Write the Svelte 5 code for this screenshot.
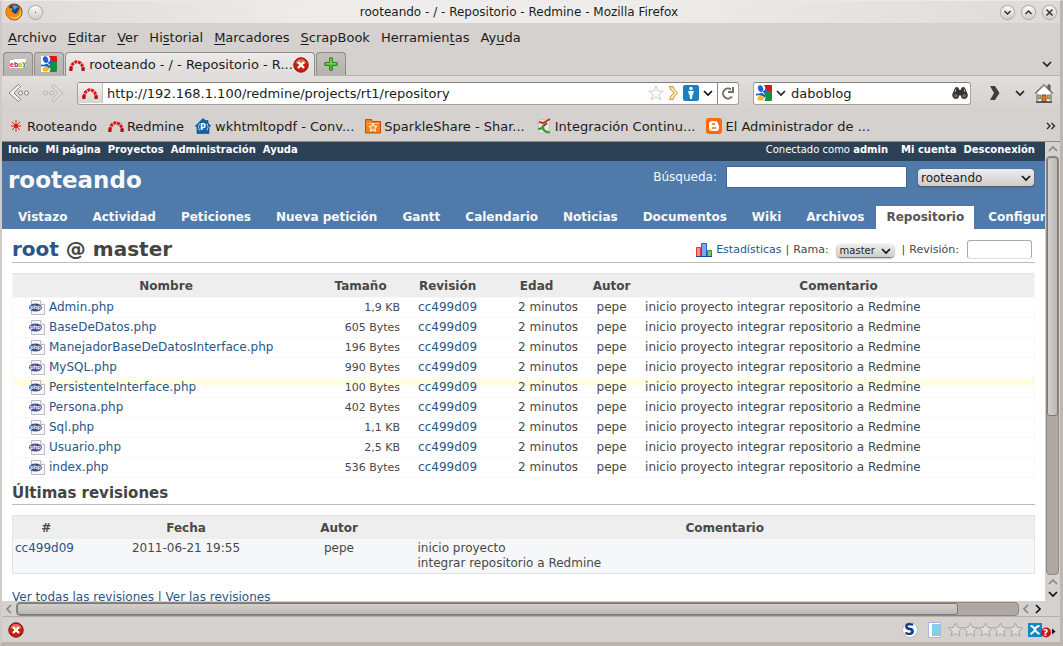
<script lang="ts">
	let address = $state('http://192.168.1.100/redmine/projects/rt1/repository');
	let search = $state('daboblog');
	let query = $state('');
	let revision = $state('');

	// k marks the index of the underlined access key
	const menus = [
		{ label: 'Archivo', k: 0 },
		{ label: 'Editar', k: 0 },
		{ label: 'Ver', k: 0 },
		{ label: 'Historial', k: 2 },
		{ label: 'Marcadores', k: 0 },
		{ label: 'ScrapBook', k: 0 },
		{ label: 'Herramientas', k: 9 },
		{ label: 'Ayuda', k: 2 }
	];

	const topLinks = ['Inicio', 'Mi página', 'Proyectos', 'Administración', 'Ayuda'];

	const sections = [
		'Vistazo',
		'Actividad',
		'Peticiones',
		'Nueva petición',
		'Gantt',
		'Calendario',
		'Noticias',
		'Documentos',
		'Wiki',
		'Archivos',
		'Repositorio',
		'Configuración'
	];

	const files = [
		{ name: 'Admin.php', size: '1,9 KB' },
		{ name: 'BaseDeDatos.php', size: '605 Bytes' },
		{ name: 'ManejadorBaseDeDatosInterface.php', size: '196 Bytes' },
		{ name: 'MySQL.php', size: '990 Bytes' },
		{ name: 'PersistenteInterface.php', size: '100 Bytes' },
		{ name: 'Persona.php', size: '402 Bytes' },
		{ name: 'Sql.php', size: '1,1 KB' },
		{ name: 'Usuario.php', size: '2,5 KB' },
		{ name: 'index.php', size: '536 Bytes' }
	];
</script>

{#snippet redmine()}
	<svg class="icon" width="16" height="16" viewBox="0 0 16 16" fill="none">
		<path d="M2 12C2.500 2.500 13.500 2.500 14 12" stroke="#d8141a" stroke-width="3" stroke-dasharray="3 .8" />
		<path d="M.3 10.500v3.500h3.200v-3.500zM12.500 10.500v3.500h3.200v-3.500z" fill="#b01015" />
	</svg>
{/snippet}

{#snippet google()}
	<svg class="icon" width="16" height="16" viewBox="0 0 16 16">
		<path d="M0 0h16v16H0z" fill="#fff" />
		<path d="M8 0h7a1 1 0 0 1 1 1v5h-5z" fill="#e8111a" />
		<path d="M11 6h5v9a1 1 0 0 1-1 1H8.500l1-3.500L8.500 9z" fill="#15913a" />
		<ellipse cx="4.600" cy="3.600" rx="2.600" ry="3.400" transform="rotate(-15 4.600 3.600)" fill="#1f63d0" />
		<path d="M0 8.500q4 .5 6-1l4 3.500-1.500 1.500Q6 9.500 0 10.500z" fill="#1f63d0" />
		<path d="M6.500 6.500q3-1 3-4.500l2 4-2.500 3z" fill="#1f63d0" />
		<ellipse cx="4.800" cy="13.200" rx="3.300" ry="2.300" fill="#f8b81c" />
	</svg>
{/snippet}

{#snippet chevron(dir: string, color: string)}
	<svg class="chevron {dir}" width="10" height="10" viewBox="0 0 10 10" fill="none">
		<path d="M1 3l4 4 4-4" stroke={color} stroke-width="1.700" />
	</svg>
{/snippet}

{#snippet closeBall()}
	<svg class="icon" width="16" height="16" viewBox="0 0 16 16">
		<circle cx="8" cy="8" r="7.200" fill="#c8200c" stroke="#801006" />
		<path d="M2.500 6a5.800 5.800 0 0 1 11 0q-5.500 3-11 0" fill="#e06a52" />
		<path d="M5 5l6 6M11 5l-6 6" stroke="#fff" stroke-width="2.400" />
	</svg>
{/snippet}

<div class="browser">
	<header class="titlebar">
		<div class="group">
			<svg class="icon" width="18" height="18" viewBox="0 0 18 18">
				<circle cx="9" cy="9" r="8" fill="#e36a0d" stroke="#943609" />
				<circle cx="9" cy="7" r="5.500" fill="#194a83" />
				<path d="M7 2.500q4-1 6 2-3 0-3 3L8.500 5z" fill="#54a9dc" />
				<path d="M1.500 5l2-2.500.5 2.500 4 .7-1.500 2L8 9.500q2 2.500 4 .5l3-5 1.500 5q-1 6-7.500 7Q2 16.500 1 10z" fill="#f08b16" />
				<path d="M14.500 4q2.500 5-1 9Q9 16 4.500 12.500q4 5.500 9.500 2Q18.500 10 14.500 4" fill="#ffd44c" />
			</svg>
			<button class="knob" aria-label="En todos los escritorios"><span class="dot"></span></button>
		</div>
		<div class="title">rooteando - / - Repositorio - Redmine - Mozilla Firefox</div>
		<div class="group right">
			<button class="knob" aria-label="Minimizar">
				<svg width="9" height="9" viewBox="0 0 9 9" fill="none" stroke="#333" stroke-width="1.500"><path d="M1.500 3l3 3 3-3" /></svg>
			</button>
			<button class="knob" aria-label="Maximizar">
				<svg width="9" height="9" viewBox="0 0 9 9" fill="none" stroke="#333" stroke-width="1.500"><path d="M1.500 6l3-3 3 3" /></svg>
			</button>
			<button class="knob" aria-label="Cerrar">
				<svg width="9" height="9" viewBox="0 0 9 9" fill="none" stroke="#333" stroke-width="1.500"><path d="M1.500 1.500l6 6M7.500 1.500l-6 6" /></svg>
			</button>
		</div>
	</header>

	<nav class="menubar">
		{#each menus as m}
			<button>{m.label.slice(0, m.k)}<u>{m.label[m.k]}</u>{m.label.slice(m.k + 1)}</button>
		{/each}
	</nav>

	<div class="tabs">
		<button class="tab pinned" aria-label="eBay">
			<svg class="icon" width="16" height="16" viewBox="0 0 16 16">
				<path d="M0 4h4V3h12v7h-3v2H0z" fill="#fff" />
				<text x="0" y="11" font-family="Liberation Sans" font-weight="bold" font-size="7"><tspan fill="#e2001a">e</tspan><tspan fill="#1d3cc2">b</tspan><tspan fill="#e0a800">a</tspan><tspan fill="#279a1d">Y</tspan></text>
			</svg>
		</button>
		<button class="tab pinned" aria-label="Google">{@render google()}</button>
		<div class="tab current">
			{@render redmine()}
			<span>rooteando - / - Repositorio - R...</span>
			<button class="plain" aria-label="Cerrar pestaña">{@render closeBall()}</button>
		</div>
		<button class="tab new" aria-label="Nueva pestaña">
			<svg class="icon" width="16" height="16" viewBox="0 0 16 16">
				<path d="M6.500 2q1.500-1 3 0v4.500H14q1 1.500 0 3H9.500V14q-1.500 1-3 0V9.500H2q-1-1.500 0-3h4.500z" fill="#48b829" stroke="#2c8a1a" />
				<path d="M7.500 3h1v4.500H13v.8H3v-.8h4.500z" fill="#9be07c" />
			</svg>
		</button>
		<button class="plain list" aria-label="Listar pestañas">{@render chevron('down', '#222')}</button>
	</div>

	<div class="navbar">
		<button class="plain" aria-label="Atrás">
			<svg width="22" height="20" viewBox="0 0 22 20" fill="#f4f3f2" stroke="#85817d">
				<path d="M10.500 1.500L1 10l9.500 8.500 2-2L6 10l6.500-6.500z" />
				<circle cx="12.500" cy="10" r="2" /><circle cx="18.500" cy="10" r="2" />
			</svg>
		</button>
		<button class="plain forward" aria-label="Adelante">
			<svg width="22" height="20" viewBox="0 0 22 20" fill="#dedbd8" stroke="#b9b5b1">
				<path d="M11.500 1.500L21 10l-9.500 8.500-2-2L16 10 9.500 3.500z" />
				<circle cx="3.500" cy="10" r="2" /><circle cx="9.500" cy="10" r="2" />
			</svg>
		</button>
		<div class="field address">
			<span class="identity">{@render redmine()}</span>
			<input type="text" aria-label="Dirección" bind:value={address} />
			<svg class="icon" width="16" height="16" viewBox="0 0 16 16" fill="#fff" stroke="#ccc">
				<path d="M8 1l2 5h5.300l-4.300 3.500 1.700 5.500L8 11.800 3.300 15 5 9.500.7 6H6z" />
			</svg>
			<svg class="icon" width="11" height="16" viewBox="0 0 11 16" fill="#fbe6b4" stroke="#d3962b">
				<path d="M1.500 1.500H5Q6 5 9.500 8 6 11 5 14.500H1.500Q2 11 6 8 2 5 1.500 1.500z" />
			</svg>
			<svg class="icon" width="16" height="16" viewBox="0 0 16 16">
				<rect width="16" height="16" rx="2" fill="#1d7fc2" />
				<circle cx="8" cy="3.500" r="1.700" fill="#fff" /><path d="M5 6h6l-1 3.500H9.500L9 14H7l-.5-4.500H6z" fill="#fff" />
			</svg>
			<button class="plain" aria-label="Historial de direcciones">{@render chevron('down', '#111')}</button>
			<button class="plain reload" aria-label="Recargar">
				<svg width="14" height="14" viewBox="0 0 14 14" fill="none" stroke="#77716a" stroke-width="2">
					<path d="M11 10.500A5 5 0 1 1 10 3.500M12 1v5H7" />
				</svg>
			</button>
		</div>
		<div class="field search">
			{@render google()}
			<button class="plain" aria-label="Elegir buscador">{@render chevron('down', '#222')}</button>
			<input type="text" aria-label="Buscar en la web" bind:value={search} />
			<button class="plain" aria-label="Buscar">
				<svg class="icon" width="16" height="14" viewBox="0 0 16 14">
					<path d="M3 2q1.500-2 3.500 0L7.500 4h1l1-2q2-2 3.500 0l2.800 6.500q0 4-3.300 4.500Q9 13 9 9.500H7Q7 13 3.500 13 .2 12 .2 8.500z" fill="#333" />
					<circle cx="3.700" cy="9.700" r="2" fill="#74604d" /><circle cx="12.300" cy="9.700" r="2" fill="#74604d" />
					<path d="M4 3l-1 3M12 3l1 3" stroke="#aaa" />
				</svg>
			</button>
		</div>
		<button class="plain" aria-label="Complemento">
			<svg width="10" height="16" viewBox="0 0 10 16"><path d="M0 1h5l4.500 7L5 15H0l4-7z" fill="#3c3f41" /></svg>
		</button>
		<button class="plain more-tools" aria-label="Más">{@render chevron('down', '#222')}</button>
		<button class="plain" aria-label="Página de inicio">
			<svg width="20" height="20" viewBox="0 0 20 20">
				<path d="M14 2h2v5h-2z" fill="#888" stroke="#444" />
				<path d="M3 9v10h14V9l-7-6z" fill="#f7f7f4" stroke="#666" />
				<path d="M.8 10.500L10 1.500l9.200 9" fill="none" stroke="#555" />
				<path d="M2.500 10.500L10 3l7.500 7.500z" fill="#fff" />
				<path d="M8 12h4v7H8z" fill="#d87920" stroke="#8b4b15" />
				<path d="M4 12h2.500v4H4zM13.500 12H16v4h-2.500z" fill="#dba859" stroke="#76644d" stroke-width=".7" />
				<path d="M2 19h16" stroke="#444" stroke-width="1.500" />
			</svg>
		</button>
	</div>

	<div class="bookmarks">
		<a class="tight" href="#rooteando">
			<svg class="icon" width="16" height="16" viewBox="0 0 16 16" stroke="#e01b1b">
				<path d="M8 2v12M3 8h10M4 4l8 8M12 4l-8 8" /><circle cx="8" cy="8" r="1.500" fill="#e01b1b" />
			</svg>
			Rooteando
		</a>
		<a class="tight" href="#redmine">{@render redmine()}Redmine</a>
		<a href="#wkhtmltopdf">
			<svg class="icon" width="16" height="16" viewBox="0 0 16 16">
				<path d="M8 .5l2.500 2H13v2.500l2.700 3-1.700 1v6.500H2V9L.3 8z" fill="#1262a0" stroke="#0b4b80" stroke-width=".6" />
				<text x="5" y="12" font-family="DejaVu Sans" font-weight="bold" font-size="8" fill="#fff">P</text>
				<path d="M5 6H4v2l-1 1 1 1v2h1M11.500 6h1v2l1 1-1 1v2h-1" fill="none" stroke="#b6d9f3" stroke-width=".8" />
			</svg>
			wkhtmltopdf - Conv...
		</a>
		<a class="tight" href="#sparkleshare">
			<svg class="icon" width="16" height="16" viewBox="0 0 16 16">
				<path d="M.5 1.500h6l1 2h8v11.500H.5z" fill="#ef821b" stroke="#b7510d" />
				<path d="M2 5.500h12" stroke="#ffc27d" />
				<path d="M8 5.500l1.200 2.500 2.800.3-2 2 .6 2.900L8 11.800l-2.600 1.400.6-2.900-2-2 2.800-.3z" fill="#ef9a45" stroke="#fff" />
			</svg>
			SparkleShare - Shar...
		</a>
		<a class="tight" href="#integracion">
			<svg class="icon" width="16" height="16" viewBox="0 0 16 16" fill="none">
				<path d="M2 2l10-1 2 3-2 11H3z" fill="#eee9dd" stroke="#c9c3b4" />
				<path d="M3 4l4 1 7-4" stroke="#bd3322" stroke-width="2" />
				<path d="M11 5L6 9" stroke="#64483a" stroke-width="2" />
				<path d="M2 10.500q3 1 5-1.500 0 5 7 5.500" stroke="#379b39" stroke-width="2.200" />
			</svg>
			Integración Continu...
		</a>
		<a class="tight" href="#administrador">
			<svg class="icon" width="16" height="16" viewBox="0 0 16 16">
				<rect width="16" height="16" rx="3" fill="#ff6a0a" />
				<path d="M6 3h3q3 0 3 3 0 1 1 1v3q0 3-3 3H6q-3 0-3-3V6q0-3 3-3" fill="#fff" />
				<path d="M6 6h3M6 10h4" stroke="#ff6a0a" stroke-width="1.500" />
			</svg>
			El Administrador de ...
		</a>
		<button class="plain more" aria-label="Más marcadores">
			<svg width="10" height="8" viewBox="0 0 10 8" fill="none" stroke="#222" stroke-width="1.300"><path d="M1 1l3 3-3 3M5.500 1l3 3-3 3" /></svg>
		</button>
	</div>

	<div class="viewport">
		<div class="page">
			<div class="top-menu">
				{#each topLinks as link}<a href="#{link}">{link}</a>{/each}
				<span class="logged">Conectado como <a href="#admin">admin</a></span>
				<a href="#cuenta">Mi cuenta</a>
				<a href="#salir">Desconexión</a>
			</div>
			<div class="header">
				<div class="heading">
					<h1>rooteando</h1>
					<label for="q">Búsqueda:</label>
					<input id="q" type="text" bind:value={query} />
					<span class="select project">
						<select aria-label="Proyecto"><option>rooteando</option></select>
						{@render chevron('down', '#111')}
					</span>
				</div>
				<nav class="main-menu">
					{#each sections as section}
						<a href="#{section}" class:selected={section === 'Repositorio'}>{section}</a>
					{/each}
				</nav>
			</div>
			<main>
				<div class="path">
					<h2><a href="#root">root</a> @ master</h2>
					<div class="contextual">
						<svg class="icon" width="16" height="14" viewBox="0 0 16 14">
							<path d="M.5 4.500h4v9h-4z" fill="#ff8b8b" stroke="#e23b3b" />
							<path d="M5.500.5h5v13h-5z" fill="#77aaf0" stroke="#245ccc" />
							<path d="M11.500 7.500h4v6h-4z" fill="#7ac57a" stroke="#2f8c2f" />
							<path d="M0 13.500h16" stroke="#233da0" />
						</svg>
						<a href="#stats">Estadísticas</a>
						<span>|</span>
						<label for="branch">Rama:</label>
						<span class="select branch">
							<select id="branch"><option>master</option></select>
							{@render chevron('down', '#111')}
						</span>
						<span>|</span>
						<label for="rev">Revisión:</label>
						<input id="rev" type="text" bind:value={revision} />
					</div>
				</div>

				<table class="entries">
					<colgroup>
						<col class="c-name" /><col class="c-size" /><col class="c-rev" /><col class="c-age" /><col class="c-author" /><col />
					</colgroup>
					<thead>
						<tr><th>Nombre</th><th>Tamaño</th><th>Revisión</th><th>Edad</th><th>Autor</th><th>Comentario</th></tr>
					</thead>
					<tbody>
						{#each files as file}
							<tr class:hovered={file.name === 'PersistenteInterface.php'}>
								<td class="name">
									<svg class="icon" width="16" height="15" viewBox="0 0 16 15">
										<path d="M2.500.5h9l4 4v10h-13z" fill="#f8f8f8" stroke="#bbb" />
										<path d="M11.500.5v4h4" fill="#fff" stroke="#bbb" />
										<ellipse cx="6.500" cy="7.500" rx="6.500" ry="4" fill="#4b4b98" />
										<text x="1" y="9" font-family="Liberation Sans" font-weight="bold" font-size="6" fill="#fff">php</text>
									</svg>
									<a href="#{file.name}">{file.name}</a>
								</td>
								<td class="size">{file.size}</td>
								<td class="center"><a href="#cc499d09">cc499d09</a></td>
								<td class="age">2 minutos</td>
								<td class="center">pepe</td>
								<td>inicio proyecto integrar repositorio a Redmine</td>
							</tr>
						{/each}
					</tbody>
				</table>

				<h3>Últimas revisiones</h3>
				<table class="changesets">
					<colgroup>
						<col class="c-id" /><col class="c-radio" /><col class="c-date" /><col class="c-who" /><col />
					</colgroup>
					<thead>
						<tr><th>#</th><th></th><th>Fecha</th><th>Autor</th><th>Comentario</th></tr>
					</thead>
					<tbody>
						<tr>
							<td><a href="#cc499d09">cc499d09</a></td>
							<td></td>
							<td class="center">2011-06-21 19:55</td>
							<td class="center">pepe</td>
							<td>inicio proyecto<br />integrar repositorio a Redmine</td>
						</tr>
					</tbody>
				</table>
				<p><a href="#todas">Ver todas las revisiones</a> | <a href="#revisiones">Ver las revisiones</a></p>
			</main>
		</div>

		<div class="vscroll">
			{@render chevron('up', '#8a8783')}
			<div class="track"><div class="thumb"></div></div>
			{@render chevron('up', '#8a8783')}
			{@render chevron('down', '#111')}
		</div>
	</div>

	<div class="hscroll">
		{@render chevron('left', '#8a8783')}
		<div class="track"><div class="thumb"></div></div>
		{@render chevron('left', '#8a8783')}
		{@render chevron('right', '#111')}
	</div>

	<footer class="status">
		<button class="plain" aria-label="Errores">{@render closeBall()}</button>
		<svg class="icon push" width="16" height="16" viewBox="0 0 16 16">
			<circle cx="8" cy="8" r="7.500" fill="#fff" stroke="#bbb" />
			<text x="2" y="13" font-family="DejaVu Sans" font-weight="bold" font-size="15" fill="#123d86">S</text>
		</svg>
		<svg class="icon sidebar" width="13" height="16" viewBox="0 0 13 16">
			<path d="M.5.500h12v15H.5z" fill="#fff" stroke="#a9b6dd" /><path d="M4 2h8v12H4z" fill="#86cfe6" />
		</svg>
		<div class="stars">
			{#each [1, 2, 3, 4, 5] as n}
				<svg width="15" height="15" viewBox="0 0 15 15">
					<path d="M7.500 1l2 4.300 5 .6-3.700 3.300 1 4.800-4.300-2.400L3.200 14l1-4.800L.5 5.900l5-.6z" fill="#deddda" stroke="#aaa7a3" />
				</svg>
			{/each}
		</div>
		<svg class="icon" width="28" height="16" viewBox="0 0 28 16">
			<path d="M0 1h14v14H0z" fill="#1287c6" />
			<path d="M2.500 4q3 0 4.500 4Q5 11 2.500 12M11.500 4Q8 4 7 8q2 3 4.500 4" fill="none" stroke="#fff" stroke-width="2" />
			<circle cx="18" cy="10.500" r="5" fill="#c8141c" />
			<text x="15" y="14" font-family="DejaVu Sans" font-weight="bold" font-size="9" fill="#fff">?</text>
			<path d="M24 6.500l3.500 3-3.500 3z" fill="#111" />
		</svg>
	</footer>
</div>

<style>
	:global(body) {
		margin: 0;
		font-family: 'DejaVu Sans', sans-serif;
		font-size: 13px;
		color: #1c1c1c;
	}
	.browser {
		display: flex;
		flex-direction: column;
		height: 100vh;
		box-sizing: border-box;
		background: #d5d1ce;
		border: 1px solid #e8e6e4;
		border-width: 1px 3px 4px 2px;
		border-color: #eceae9 #bdb7b3 #bbb3af #d0cbc8;
		overflow: hidden;
	}
	button,
	input,
	select {
		font: inherit;
		color: inherit;
		margin: 0;
		padding: 0;
		border: 0;
		background: none;
	}
	a {
		color: inherit;
		text-decoration: none;
	}
	svg {
		display: block;
		flex: none;
	}
	.plain {
		flex: none;
	}

	/* window chrome */
	.titlebar {
		display: flex;
		align-items: center;
		height: 22px;
		flex: none;
		background: linear-gradient(90deg, #dedad8, #eeedeb 30%, #eeedeb 60%, #dedad8);
		font-size: 12px;
	}
	.title {
		padding-right: 20px;
	}
	.group {
		flex: 1;
		display: flex;
		gap: 6px;
		padding-left: 3px;
		align-items: center;
	}
	.group.right {
		justify-content: flex-end;
		gap: 8px;
		padding-right: 4px;
	}
	.knob {
		display: flex;
		align-items: center;
		justify-content: center;
		width: 13px;
		height: 13px;
		border-radius: 50%;
		background: linear-gradient(#fbfbfa, #cfccc9);
		box-shadow: 0 0 1px 1px #aaa7a4;
	}
	.dot {
		width: 1px;
		height: 1px;
		background: #555;
	}
	.group.right .knob svg {
		margin: 0 2px;
	}
	.menubar {
		display: flex;
		gap: 11px;
		height: 29px;
		flex: none;
		padding-left: 6px;
		align-items: center;
	}
	.menubar u {
		text-underline-offset: 2px;
	}
	.tabs {
		display: flex;
		height: 23px;
		flex: none;
		border-bottom: 1px solid #b7b3b0;
		padding-left: 1px;
		gap: 1px;
	}
	.tab {
		display: flex;
		align-items: center;
		justify-content: center;
		box-sizing: border-box;
		width: 30px;
		border: 1px solid #8f8b88;
		border-bottom: 0;
		border-radius: 4px 4px 0 0;
		background: linear-gradient(#c4c0bd, #b5b1ae);
	}
	.tab.current {
		width: 250px;
		margin-bottom: -1px;
		gap: 4px;
		padding: 0 6px 0 4px;
		background: linear-gradient(#eceae9, #dfdcda);
	}
	.tab.current span {
		flex: 1;
		white-space: nowrap;
	}
	.tab.current .plain {
		margin-left: -4px;
	}
	.list {
		margin: 0 8px 0 auto;
	}
	.navbar {
		display: flex;
		align-items: center;
		height: 34px;
		flex: none;
		padding: 0 6px;
		background: linear-gradient(#e1dedc, #d5d1ce);
	}
	.forward {
		margin: 0 13px 0 12px;
	}
	.field {
		display: flex;
		align-items: center;
		gap: 4px;
		height: 21px;
		background: #fff;
		border: 1px solid #a5a19e;
		border-top-color: #838080;
		border-radius: 3px;
	}
	.field input {
		flex: 1;
		min-width: 0;
		outline: none;
	}
	.address {
		flex: 3;
	}
	.identity {
		display: flex;
		align-items: center;
		justify-content: center;
		width: 24px;
		height: 20px;
		background: linear-gradient(#f3f2f1, #d6d3d0);
		border-right: 1px solid #c2bfbc;
	}
	.reload {
		border-left: 1px solid #888;
		padding: 4px 3px;
		height: 22px;
	}
	.search {
		flex: none;
		width: 212px;
		padding: 0 2px;
		margin: 0 19px 0 14px;
	}
	.search input {
		padding-left: 1px;
	}
	.more-tools {
		margin: 0 9px 0 15px;
	}
	.bookmarks {
		display: flex;
		align-items: center;
		height: 31px;
		box-sizing: border-box;
		flex: none;
		padding: 1px 4px 0 6px;
		gap: 11px;
		white-space: nowrap;
	}
	.bookmarks a {
		display: flex;
		align-items: center;
		gap: 4px;
	}
	.bookmarks a.tight {
		gap: 3px;
	}
	.more {
		margin-left: auto;
	}

	/* page area */
	.viewport {
		display: flex;
		flex: 1;
		min-height: 0;
		border-top: 1px solid #8d8985;
	}
	.page {
		flex: 1;
		min-width: 0;
		overflow: hidden;
		background: #fff;
		color: #484848;
		font-size: 12px;
	}
	.top-menu {
		display: flex;
		gap: 7px;
		height: 19px;
		line-height: 16px;
		padding: 0 10px 0 6px;
		background: #2c4056;
		color: #fff;
		font-size: 10px;
	}
	.top-menu a {
		font-weight: bold;
	}
	.logged {
		margin-left: auto;
		margin-right: 6px;
	}
	.header {
		background: #507aaa;
		color: #f8f8f8;
	}
	.heading {
		display: flex;
		align-items: flex-start;
		height: 40px;
		padding: 5px 11px 0 6px;
	}
	h1 {
		flex: 1;
		margin: 0;
		font-size: 23px;
		line-height: 28px;
	}
	.heading label {
		line-height: 22px;
		margin-right: 9px;
	}
	.heading input {
		width: 181px;
		height: 22px;
		background: #fff;
		color: #222;
		border: 1px solid #3f6590;
		box-sizing: border-box;
		margin-right: 11px;
	}
	.select {
		position: relative;
		display: block;
		color: #222;
	}
	.select select {
		appearance: none;
		width: 100%;
		height: 100%;
		padding-left: 3px;
		border-radius: 4px;
		background: linear-gradient(#efeeed, #cfccc9);
		box-shadow: 0 1px 2px #555;
	}
	.select :global(.chevron) {
		position: absolute;
		right: 3px;
		top: calc(50% - 5px);
		pointer-events: none;
	}
	.project {
		width: 116px;
		height: 17px;
		margin-top: 3px;
	}
	.main-menu {
		display: flex;
		gap: 3px;
		padding-left: 5px;
		white-space: nowrap;
		overflow: hidden;
		font-weight: bold;
	}
	.main-menu a {
		padding: 0 11px;
		line-height: 23px;
	}
	.main-menu .selected {
		padding: 0 10px;
		margin-left: -2px;
		background: #fff;
		color: #555;
	}
	main {
		padding: 5px 10px 0;
	}
	main a {
		color: #2a5685;
	}
	.path {
		display: flex;
		justify-content: space-between;
		border-bottom: 1px solid #bbb;
		height: 28px;
		margin-bottom: 10px;
	}
	h2 {
		margin: 0;
		font-size: 20px;
		line-height: 30px;
		color: #444;
	}
	.contextual {
		display: flex;
		align-items: center;
		gap: 4px;
		font-size: 11px;
		padding: 3px 3px 0 0;
	}
	.branch {
		width: 57px;
		height: 13px;
		margin: 2px 4px 0;
		font-size: 10px;
	}
	.contextual input {
		box-sizing: border-box;
		width: 65px;
		height: 19px;
		margin-left: 4px;
		border: 1px solid #aaa;
		border-bottom-color: #ddd;
		border-radius: 3px;
	}
	table {
		width: 100%;
		table-layout: fixed;
		border-collapse: collapse;
		border: 1px solid #e4e4e4;
	}
	th {
		height: 23px;
		padding: 0;
		background: #eee;
	}
	td {
		padding: 2px;
		line-height: 15px;
		vertical-align: top;
	}
	.entries tbody {
		border: 1px solid #f8f8f8;
	}
	.entries tbody tr {
		border-top: 1px solid #f8f8f8;
	}
	.entries {
		border-bottom: 0;
		border-left-color: #f8f8f8;
		border-right-color: #f8f8f8;
	}
	.hovered {
		background: linear-gradient(#ffffdd 6px, #fff 6px);
	}
	.entries .name {
		display: flex;
		gap: 4px;
		padding-left: 16px;
	}
	.c-name { width: 30%; }
	.c-size { width: 83px; }
	.c-rev { width: 91px; }
	.c-age { width: 87px; }
	.c-author { width: 63px; }
	.c-id { width: 67px; }
	.c-radio { width: 30px; }
	.c-date,
	.c-who { width: 153px; }
	.size {
		text-align: right;
		font-size: 11px;
	}
	.age {
		text-align: right;
	}
	.center {
		text-align: center;
	}
	h3 {
		margin: 4px 0 10px;
		font-size: 15px;
		line-height: 22px;
		border-bottom: 1px solid #bbb;
		color: #444;
	}
	.changesets td {
		background: #f6f7f9;
		height: 30px;
	}
	p {
		margin: 16px 0;
		line-height: 15px;
	}

	/* scrollbars */
	.chevron.up { transform: rotate(180deg); }
	.chevron.left { transform: rotate(90deg); }
	.chevron.right { transform: rotate(-90deg); }
	.vscroll {
		display: flex;
		flex-direction: column;
		align-items: center;
		gap: 2px;
		width: 15px;
		padding: 2px 0;
		box-sizing: border-box;
	}
	.track {
		flex: 1;
		box-sizing: border-box;
		background: #b0a8a4;
		border: 1px solid #8c8783;
		border-radius: 4px;
	}
	.thumb {
		box-sizing: border-box;
		border: 1px solid #7d7875;
		border-radius: 3px;
		background: #c6c2bf;
	}
	.vscroll .track {
		width: 13px;
	}
	.vscroll .thumb {
		height: 62%;
		background: linear-gradient(90deg, #d2cfcc, #bdb8b5);
	}
	.hscroll {
		display: flex;
		align-items: center;
		flex: none;
		gap: 2px;
		height: 15px;
		padding: 0 17px 0 2px;
		border-bottom: 1px solid #b5b0ad;
	}
	.hscroll .track {
		height: 14px;
	}
	.hscroll .thumb {
		width: 94%;
		height: 12px;
		background: linear-gradient(#d2cfcc, #bdb8b5);
	}
	.status {
		display: flex;
		align-items: center;
		flex: none;
		height: 25px;
		padding: 0 4px 0 6px;
	}
	.push {
		margin-left: auto;
	}
	.sidebar {
		margin: 0 7px 0 10px;
	}
	.stars {
		display: flex;
		margin-right: 5px;
	}
</style>
